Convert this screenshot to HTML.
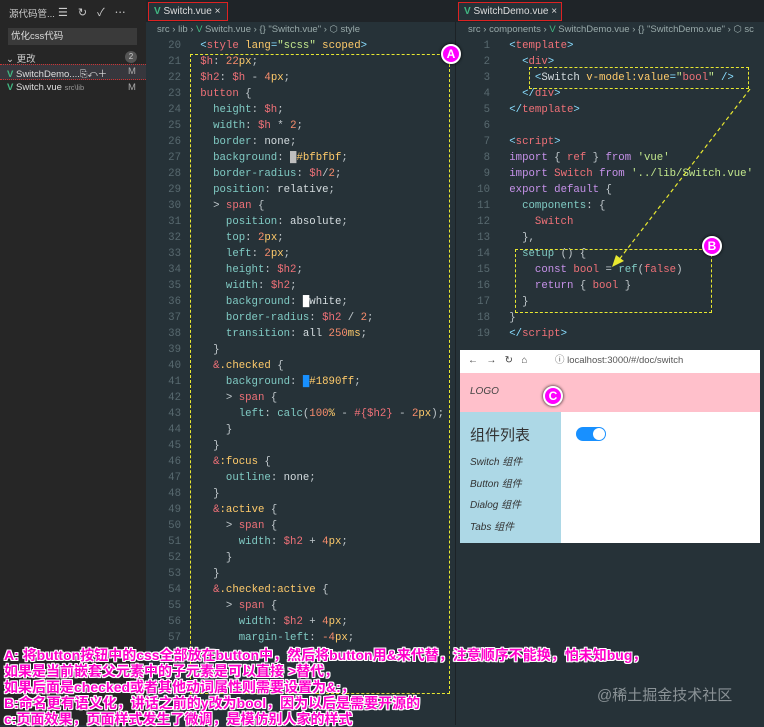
<!DOCTYPE html>
<html><head><meta charset="utf-8"><style>
*{margin:0;padding:0;box-sizing:border-box}
body{width:764px;height:725px;overflow:hidden;background:#263238;position:relative;font-family:"Liberation Sans","Noto Sans CJK SC",sans-serif}
.abs{position:absolute}
.side{left:0;top:0;width:146px;height:725px;background:#262626;color:#ccc;font-size:10px}
.tabbar{top:0;height:22px;background:#1f2428}
.crumb{top:22px;height:16px;font-size:9.5px;color:#9aa;line-height:16px;white-space:nowrap;overflow:hidden}
.code{font-family:"Liberation Mono",monospace;font-size:10.7px;white-space:pre;line-height:16px;color:#c0c8cc}
.ln{color:#58696f;text-align:right;width:26px;display:inline-block}
.p{color:#80cbc4}.v{color:#f07178}.n{color:#f78c6c}.u{color:#ffcb6b}.t{color:#f07178}.pu{color:#89ddff}.k{color:#c792ea}.s{color:#c3e88d}.w{color:#d4dcdf}.a{color:#ffcb6b}
.note{font-size:14px;font-weight:bold;color:#ff00cc;white-space:nowrap;text-shadow:1px 1px 0 #fff,-1px -1px 0 #fff,1px -1px 0 #fff,-1px 1px 0 #fff,0 1px 0 #fff,0 -1px 0 #fff,1px 0 0 #fff,-1px 0 0 #fff;line-height:16px}
.circ{width:20px;height:20px;border-radius:50%;background:#f0f;border:2px solid #fff;color:#fff;font-weight:bold;font-size:12px;text-align:center;line-height:16px;box-shadow:0 0 3px #000}
</style></head><body>
<div class="abs side">
 <div class="abs" style="left:9px;top:6px;font-size:9.5px;color:#ccc">源代码管...</div>
 <div class="abs" style="left:58px;top:4px;font-size:11px;color:#ccc;letter-spacing:10px">☰↻✓⋯</div>
 <div class="abs" style="left:8px;top:28px;width:129px;height:17px;background:#3a3a3a;color:#ddd;font-size:9.5px;line-height:17px;padding-left:3px">优化css代码</div>
 <div class="abs" style="left:6px;top:51px;font-size:9.5px">⌄ 更改</div>
 <div class="abs" style="left:125px;top:51px;width:12px;height:12px;border-radius:6px;background:#555;font-size:8px;text-align:center;line-height:12px">2</div>
 <div class="abs" style="left:0;top:64px;width:146px;height:16px;background:#37373d;border-top:1px dotted #c33;border-bottom:1px dotted #c33"></div>
 <div class="abs" style="left:7px;top:66px;font-size:9.5px;color:#ddd"><span style="color:#41b883;font-weight:bold">V</span> SwitchDemo....⎘↶＋ <span style="position:absolute;left:121px;color:#aaa">M</span></div>
 <div class="abs" style="left:7px;top:82px;font-size:9.5px;color:#ddd;width:140px"><span style="color:#41b883;font-weight:bold">V</span> Switch.vue <span style="font-size:7.5px;color:#999">src\lib</span><span style="position:absolute;left:121px;color:#aaa">M</span></div>
</div>
<div class="abs tabbar" style="left:146px;width:309px"></div>
<div class="abs" style="left:148px;top:2px;width:80px;height:19px;border:1px solid #d22;background:#263238;color:#ddd;font-size:10px;line-height:17px;padding-left:5px"><span style="color:#41b883;font-weight:bold">V</span> Switch.vue ×</div>
<div class="abs crumb" style="left:157px;width:298px">src › lib › <span style="color:#41b883">V</span> Switch.vue › {} "Switch.vue" › ⬡ style</div>
<div class="abs tabbar" style="left:455px;width:309px;background:#1f2428"></div>
<div class="abs" style="left:458px;top:2px;width:104px;height:19px;border:1px solid #d22;background:#263238;color:#ddd;font-size:10px;line-height:17px;padding-left:5px"><span style="color:#41b883;font-weight:bold">V</span> SwitchDemo.vue ×</div>
<div class="abs crumb" style="left:468px;width:296px">src › components › <span style="color:#41b883">V</span> SwitchDemo.vue › {} "SwitchDemo.vue" › ⬡ sc</div>
<div class="abs" style="left:455px;top:22px;width:1px;height:703px;background:#1c2226"></div>

<div class="abs code" style="left:155px;top:38px"><span class="ln">20</span>   <span class="pu">&lt;</span><span class="t">style</span> <span class="a">lang</span><span class="pu">=</span><span class="s">"scss"</span> <span class="a">scoped</span><span class="pu">&gt;</span>
<span class="ln">21</span>   <span class="v">$h</span>: <span class="n">22</span><span class="u">px</span>;
<span class="ln">22</span>   <span class="v">$h2</span>: <span class="v">$h</span> - <span class="n">4</span><span class="u">px</span>;
<span class="ln">23</span>   <span class="t">button</span> {
<span class="ln">24</span>     <span class="p">height</span>: <span class="v">$h</span>;
<span class="ln">25</span>     <span class="p">width</span>: <span class="v">$h</span> * <span class="n">2</span>;
<span class="ln">26</span>     <span class="p">border</span>: <span class="w">none</span>;
<span class="ln">27</span>     <span class="p">background</span>: <span style="color:#bfbfbf">█</span><span class="u">#bfbfbf</span>;
<span class="ln">28</span>     <span class="p">border-radius</span>: <span class="v">$h</span>/<span class="n">2</span>;
<span class="ln">29</span>     <span class="p">position</span>: <span class="w">relative</span>;
<span class="ln">30</span>     &gt; <span class="t">span</span> {
<span class="ln">31</span>       <span class="p">position</span>: <span class="w">absolute</span>;
<span class="ln">32</span>       <span class="p">top</span>: <span class="n">2</span><span class="u">px</span>;
<span class="ln">33</span>       <span class="p">left</span>: <span class="n">2</span><span class="u">px</span>;
<span class="ln">34</span>       <span class="p">height</span>: <span class="v">$h2</span>;
<span class="ln">35</span>       <span class="p">width</span>: <span class="v">$h2</span>;
<span class="ln">36</span>       <span class="p">background</span>: <span style="color:#fff">█</span><span class="w">white</span>;
<span class="ln">37</span>       <span class="p">border-radius</span>: <span class="v">$h2</span> / <span class="n">2</span>;
<span class="ln">38</span>       <span class="p">transition</span>: <span class="w">all</span> <span class="n">250</span><span class="u">ms</span>;
<span class="ln">39</span>     }
<span class="ln">40</span>     <span class="v">&amp;</span><span class="u">.checked</span> {
<span class="ln">41</span>       <span class="p">background</span>: <span style="color:#1890ff">█</span><span class="u">#1890ff</span>;
<span class="ln">42</span>       &gt; <span class="t">span</span> {
<span class="ln">43</span>         <span class="p">left</span>: <span class="p">calc</span>(<span class="n">100</span><span class="u">%</span> - <span class="v">#{$h2}</span> - <span class="n">2</span><span class="u">px</span>);
<span class="ln">44</span>       }
<span class="ln">45</span>     }
<span class="ln">46</span>     <span class="v">&amp;</span><span class="u">:focus</span> {
<span class="ln">47</span>       <span class="p">outline</span>: <span class="w">none</span>;
<span class="ln">48</span>     }
<span class="ln">49</span>     <span class="v">&amp;</span><span class="u">:active</span> {
<span class="ln">50</span>       &gt; <span class="t">span</span> {
<span class="ln">51</span>         <span class="p">width</span>: <span class="v">$h2</span> + <span class="n">4</span><span class="u">px</span>;
<span class="ln">52</span>       }
<span class="ln">53</span>     }
<span class="ln">54</span>     <span class="v">&amp;</span><span class="u">.checked:active</span> {
<span class="ln">55</span>       &gt; <span class="t">span</span> {
<span class="ln">56</span>         <span class="p">width</span>: <span class="v">$h2</span> + <span class="n">4</span><span class="u">px</span>;
<span class="ln">57</span>         <span class="p">margin-left</span>: <span class="n">-4</span><span class="u">px</span>;</div>
<div class="abs" style="left:190px;top:54px;width:260px;height:640px;border:1px dashed #e8e830"></div>
<div class="abs circ" style="left:441px;top:44px">A</div>

<div class="abs code" style="left:464px;top:38px"><span class="ln">1</span>   <span class="pu">&lt;</span><span class="t">template</span><span class="pu">&gt;</span>
<span class="ln">2</span>     <span class="pu">&lt;</span><span class="t">div</span><span class="pu">&gt;</span>
<span class="ln">3</span>       <span class="pu">&lt;</span><span class="w">Switch</span> <span class="a">v-model:value</span><span class="pu">=</span><span class="s">"</span><span class="t">bool</span><span class="s">"</span> <span class="pu">/&gt;</span>
<span class="ln">4</span>     <span class="pu">&lt;/</span><span class="t">div</span><span class="pu">&gt;</span>
<span class="ln">5</span>   <span class="pu">&lt;/</span><span class="t">template</span><span class="pu">&gt;</span>
<span class="ln">6</span>
<span class="ln">7</span>   <span class="pu">&lt;</span><span class="t">script</span><span class="pu">&gt;</span>
<span class="ln">8</span>   <span class="k">import</span> { <span class="v">ref</span> } <span class="k">from</span> <span class="s">'vue'</span>
<span class="ln">9</span>   <span class="k">import</span> <span class="v">Switch</span> <span class="k">from</span> <span class="s">'../lib/Switch.vue'</span>
<span class="ln">10</span>   <span class="k">export</span> <span class="k">default</span> {
<span class="ln">11</span>     <span class="p">components</span>: {
<span class="ln">12</span>       <span class="v">Switch</span>
<span class="ln">13</span>     },
<span class="ln">14</span>     <span class="p">setup</span> () {
<span class="ln">15</span>       <span class="k">const</span> <span class="v">bool</span> = <span class="p">ref</span>(<span class="v">false</span>)
<span class="ln">16</span>       <span class="k">return</span> { <span class="v">bool</span> }
<span class="ln">17</span>     }
<span class="ln">18</span>   }
<span class="ln">19</span>   <span class="pu">&lt;/</span><span class="t">script</span><span class="pu">&gt;</span></div>
<div class="abs" style="left:529px;top:67px;width:220px;height:22px;border:1px dashed #e8e830"></div>
<div class="abs" style="left:515px;top:249px;width:197px;height:64px;border:1px dashed #e8e830"></div>
<div class="abs circ" style="left:702px;top:236px">B</div>
<svg class="abs" style="left:600px;top:89px" width="160" height="180"><path d="M150 0 L18 172" stroke="#e8e830" stroke-width="1.2" stroke-dasharray="4 3" fill="none"/><path d="M12 178 L16 166 L24 172 Z" fill="#e8e830"/></svg>

<div class="abs" style="left:460px;top:350px;width:300px;height:193px;background:#fff">
 <div class="abs" style="left:0;top:0;width:300px;height:23px;background:#fff;font-size:10px;color:#444;line-height:22px;padding-left:8px;white-space:nowrap">←&nbsp;&nbsp;&nbsp;→&nbsp;&nbsp;&nbsp;↻&nbsp;&nbsp;&nbsp;⌂<span style="position:absolute;left:95px;top:0;font-size:9.5px;color:#555">ⓘ localhost:3000/#/doc/switch</span></div>
 <div class="abs" style="left:0;top:23px;width:300px;height:39px;background:#ffc0cb"><span class="abs" style="left:10px;top:13px;font-size:10px;font-style:italic;color:#444">LOGO</span></div>
 <div class="abs" style="left:0;top:62px;width:101px;height:131px;background:#add8e6;color:#333">
  <div class="abs" style="left:10px;top:12px;font-size:15px">组件列表</div>
  <div class="abs" style="left:10px;top:40px;font-size:10px;font-style:italic;line-height:21.7px">Switch 组件<br>Button 组件<br>Dialog 组件<br>Tabs 组件</div>
 </div>
 <div class="abs" style="left:116px;top:77px;width:30px;height:14px;border-radius:7px;background:#1890ff"><div class="abs" style="left:17px;top:1px;width:12px;height:12px;border-radius:6px;background:#fff"></div></div>
</div>
<div class="abs circ" style="left:543px;top:386px">C</div>

<div class="abs note" style="left:4px;top:647px">A: 将button按钮中的css全部放在button中，然后将button用&amp;来代替，注意顺序不能换，怕未知bug，<br>如果是当前嵌套父元素中的子元素是可以直接 &gt;替代，<br>如果后面是checked或者其他动词属性则需要设置为&amp;:，<br>B:命名更有语义化，讲话之前的y改为bool，因为以后是需要开源的<br>c:页面效果，页面样式发生了微调，是模仿别人家的样式</div>
<div class="abs" style="left:597px;top:684px;font-size:15px;color:#8a9296">@稀土掘金技术社区</div>
</body></html>
